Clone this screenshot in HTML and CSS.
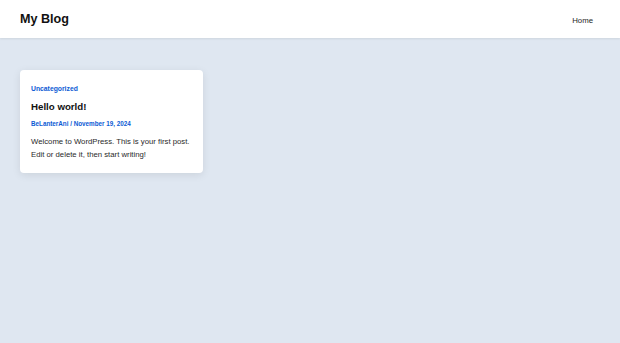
FILE: index.html
```html
<!DOCTYPE html>
<html lang="en">
<head>
    <meta charset="UTF-8">
    <meta name="viewport" content="width=device-width, initial-scale=1.0">
    <title>My Blog</title>
    <link rel="stylesheet" href="styles.css">
</head>
<body>

<header class="site-header">
    <div class="site-title">My Blog</div>
    <nav class="site-nav">
        <a href="#">Home</a>
    </nav>
</header>

<main class="posts">
    <article class="post-card">
        <a class="post-category" href="#">Uncategorized</a>
        <h2 class="post-title">Hello world!</h2>
        <div class="post-meta">BeLanterAni / November 19, 2024</div>
        <p class="post-excerpt">Welcome to WordPress. This is your first post. Edit or delete it, then start writing!</p>
    </article>
</main>

</body>
</html>
```

FILE: styles.css
```css
body {
    font-family: 'Liberation Sans', Arial, sans-serif;
    background: #dfe7f1;
    margin: 0;
    color: #1e1e1e;
}

a {
    text-decoration: none;
}

.site-header {
    background: #ffffff;
    height: 38px;
    display: flex;
    align-items: center;
    justify-content: space-between;
    padding: 0 27px 0 20px;
    box-shadow: 0 1px 2px rgba(0, 0, 0, 0.08);
}

.site-title {
    font-size: 12.6px;
    font-weight: bold;
    color: #111;
}

.site-nav {
    margin-bottom: 2px;
}

.site-nav a {
    font-size: 7.8px;
    font-weight: 500;
    color: #1e1e1e;
}

.posts {
    padding: 32px 20px;
    display: grid;
    grid-template-columns: 183px;
}

.post-card {
    background: #ffffff;
    border-radius: 4px;
    padding: 14px 11px 12px 11px;
    box-shadow: 0 2px 8px rgba(0, 0, 0, 0.09);
}

.post-category {
    display: block;
    font-size: 6.8px;
    line-height: 9px;
    font-weight: bold;
    color: #0b5ad4;
}

.post-title {
    font-size: 9.7px;
    line-height: 14px;
    margin: 7px 0 0;
    color: #111;
}

.post-meta {
    font-size: 6.3px;
    line-height: 8px;
    font-weight: bold;
    color: #0b5ad4;
    margin-top: 6px;
}

.post-excerpt {
    font-size: 7.75px;
    line-height: 13px;
    margin: 7px 0 0;
    color: #2a2a2a;
}
```
